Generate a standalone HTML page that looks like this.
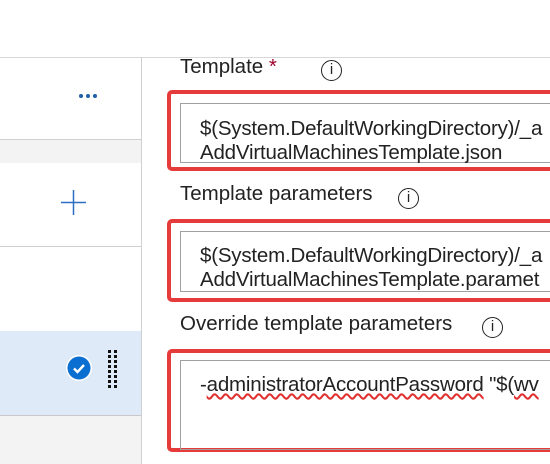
<!DOCTYPE html>
<html><head><style>
body{margin:0;width:550px;height:464px;overflow:hidden;background:#fff;font-family:"Liberation Sans",sans-serif;position:relative}
.a{position:absolute}
.lbl{position:absolute;left:180px;font-size:20.5px;color:#222;white-space:nowrap;letter-spacing:0px;line-height:24px}
.red{position:absolute;left:167px;width:400px;border:4px solid #e63b3b;border-radius:5px;box-sizing:border-box}
.inp{position:absolute;left:180px;width:400px;border:1px solid #a0a0a0;box-sizing:border-box;font-size:20.5px;color:#222;line-height:24px;padding-left:19px;white-space:nowrap;letter-spacing:-0.2px}
.info{position:absolute;width:21px;height:21px;border:1.5px solid #222;border-radius:50%;box-sizing:border-box;font-size:15px;text-align:center;line-height:18px;color:#222}
</style></head><body>
<div class="a" style="left:0;top:57px;width:550px;height:1px;background:#d8d8d8"></div>
<div class="a" style="left:141px;top:57px;width:1px;height:407px;background:#d0d0d0"></div>
<div class="a" style="left:0;top:139px;width:141px;height:1px;background:#d0d0d0"></div>
<div class="a" style="left:0;top:140px;width:141px;height:23px;background:#f3f3f3"></div>
<div class="a" style="left:0;top:246px;width:141px;height:1px;background:#d0d0d0"></div>
<div class="a" style="left:0;top:331px;width:141px;height:84px;background:#deeaf7"></div>
<div class="a" style="left:0;top:415px;width:141px;height:1px;background:#c8c8c8"></div>
<div class="a" style="left:0;top:416px;width:141px;height:48px;background:#f3f3f3"></div>
<svg class="a" style="left:78px;top:92px" width="24" height="8"><circle cx="3" cy="4" r="2" fill="#1f5fa8"/><circle cx="10" cy="4" r="2" fill="#1f5fa8"/><circle cx="17" cy="4" r="2" fill="#1f5fa8"/></svg>
<svg class="a" style="left:61px;top:190px" width="25" height="25"><path d="M12.5 0V25M0 12.5H25" stroke="#2b6fc2" stroke-width="1.5"/></svg>
<svg class="a" style="left:65px;top:354px" width="28" height="28"><circle cx="14" cy="14" r="13" fill="#fff"/><circle cx="14" cy="14" r="11.5" fill="#0a6fd1"/><path d="M9 14.5l3.5 3.5 6.5-7" stroke="#fff" stroke-width="2.4" fill="none"/></svg>
<svg class="a" style="left:108px;top:350px" width="12" height="42"><g fill="#111"><rect x="0" y="0" width="3" height="3"/><rect x="6" y="0" width="3" height="3"/><rect x="0" y="5" width="3" height="3"/><rect x="6" y="5" width="3" height="3"/><rect x="0" y="10" width="3" height="3"/><rect x="6" y="10" width="3" height="3"/><rect x="0" y="15" width="3" height="3"/><rect x="6" y="15" width="3" height="3"/><rect x="0" y="20" width="3" height="3"/><rect x="6" y="20" width="3" height="3"/><rect x="0" y="25" width="3" height="3"/><rect x="6" y="25" width="3" height="3"/><rect x="0" y="30" width="3" height="3"/><rect x="6" y="30" width="3" height="3"/><rect x="0" y="35" width="3" height="3"/><rect x="6" y="35" width="3" height="3"/></g></svg>
<div class="lbl" style="top:55px">Template <span style="color:#a0002a">*</span></div>
<div class="info" style="left:321px;top:60px">i</div>
<div class="red" style="top:90px;height:81px"></div>
<div class="inp" style="top:103px;height:60px;padding-top:13px">$(System.DefaultWorkingDirectory)/_a<br>AddVirtualMachinesTemplate.json</div>
<div class="lbl" style="top:182px">Template parameters</div>
<div class="info" style="left:398px;top:188px">i</div>
<div class="red" style="top:219px;height:83px"></div>
<div class="inp" style="top:231px;height:61px;padding-top:12px">$(System.DefaultWorkingDirectory)/_a<br>AddVirtualMachinesTemplate.paramet</div>
<div class="lbl" style="top:312px">Override template parameters</div>
<div class="info" style="left:482px;top:317px">i</div>
<div class="red" style="top:349px;height:103px"></div>
<div class="inp" style="top:360px;height:90px;padding-top:12px">-<span style="text-decoration:underline wavy #e03030">administratorAccountPassword</span> "$(<span style="text-decoration:underline wavy #e03030">wv</span></div>
</body></html>
